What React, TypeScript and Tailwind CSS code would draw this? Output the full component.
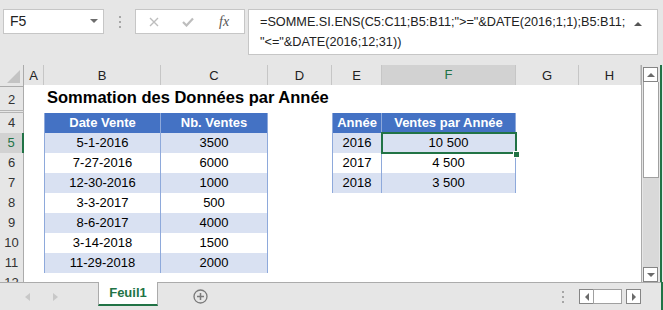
import React from 'react';

const GRID = 'grid grid-cols-[24px_20px_117px_107px_64px_50px_134px_63px_62px]';
const LETTERS = ['A', 'B', 'C', 'D', 'E', 'F', 'G', 'H'];

const sales = [
  ['5-1-2016', '3500', '2016', '10 500'],
  ['7-27-2016', '6000', '2017', '4 500'],
  ['12-30-2016', '1000', '2018', '3 500'],
  ['3-3-2017', '500'],
  ['8-6-2017', '4000'],
  ['3-14-2018', '1500'],
  ['11-29-2018', '2000'],
];

function RowHead({ n, active }: { n: number; active?: boolean }) {
  return (
    <div
      className={
        active
          ? 'flex items-center justify-center border-b border-b-[#d4d4d4] border-r-2 border-r-[#217346] bg-[#d2d2d2] text-[13px] text-[#217346]'
          : 'flex items-center justify-center border-b border-b-[#d4d4d4] border-r border-r-[#ababab] bg-[#e6e6e6] text-[13px] text-[#333]'
      }
    >
      {n}
    </div>
  );
}

function TCell({ text, kind, first }: { text?: string; kind: 'hdr' | 'band' | 'plain'; first?: boolean }) {
  const bg =
    kind === 'hdr' ? 'bg-[#4472c4] text-white font-bold' : kind === 'band' ? 'bg-[#d9e1f2] text-black' : 'bg-white text-black';
  return (
    <div
      className={`flex items-center justify-center whitespace-nowrap border-b border-r border-[#8ea9db] text-[13px] ${first ? 'border-l' : ''} ${bg}`}
    >
      {text}
    </div>
  );
}

function Blank() {
  return <div className="bg-white" />;
}

function Dots() {
  return (
    <div className="flex flex-col gap-[3px]">
      <div className="h-[2px] w-[2px] bg-[#a6a6a6]" />
      <div className="h-[2px] w-[2px] bg-[#a6a6a6]" />
      <div className="h-[2px] w-[2px] bg-[#a6a6a6]" />
    </div>
  );
}

function ArrowBox({ dir }: { dir: 'up' | 'down' | 'left' | 'right' }) {
  const paths = {
    up: 'M0 5L4 1L8 5Z',
    down: 'M0 1L8 1L4 5Z',
    left: 'M5 0L5 8L1 4Z',
    right: 'M1 0L1 8L5 4Z',
  };
  const vertical = dir === 'up' || dir === 'down';
  return (
    <div className="flex h-[15px] w-[15px] items-center justify-center border border-[#858585] bg-white">
      <svg width={vertical ? 8 : 6} height={vertical ? 6 : 8}>
        <path d={paths[dir]} fill="#6b6b6b" />
      </svg>
    </div>
  );
}

export default function App() {
  return (
    <div className="flex h-[310px] w-[663px] flex-col overflow-hidden bg-[#e6e6e6] font-['Liberation_Sans',Arial,sans-serif] text-black">
      {/* formula bar */}
      <div className="flex h-[65px] items-start pt-[9px]">
        <div className="ml-[3px] flex h-[25px] w-[101px] items-center justify-between border border-[#c6c6c6] bg-white pl-[6px] pr-[5px] text-[14px] text-[#222]">
          <span>F5</span>
          <svg width="8" height="5">
            <path d="M0 0H8L4 4Z" fill="#6d6d6d" />
          </svg>
        </div>
        <div className="ml-[15px] mt-[7px]">
          <Dots />
        </div>
        <div className="ml-[14px] flex h-[25px] w-[110px] items-center border border-[#c6c6c6] bg-white">
          <svg width="10" height="10" className="ml-[13px]">
            <path d="M1 1L9 9M9 1L1 9" stroke="#bdbdbd" strokeWidth="1.4" />
          </svg>
          <svg width="12" height="10" className="ml-[23px]">
            <path d="M1 5L4.5 8.5L11 1.5" stroke="#bdbdbd" strokeWidth="2.2" fill="none" />
          </svg>
          <span className="ml-[25px] font-['Liberation_Serif',serif] text-[14px] italic text-[#555]">fx</span>
        </div>
        <div className="ml-[3px] flex h-[46px] w-[410px] items-start justify-between border border-[#c6c6c6] bg-white pl-[11px] pr-[15px] pt-[2px] text-[12.7px] leading-[20px] text-[#222]">
          <div className="whitespace-pre">
            <div>=SOMME.SI.ENS(C5:C11;B5:B11;"&gt;="&amp;DATE(2016;1;1);B5:B11;</div>
            <div>"&lt;="&amp;DATE(2016;12;31))</div>
          </div>
          <svg width="8" height="5" className="mt-[9px]">
            <path d="M0 5L4 1L8 5Z" fill="#555" />
          </svg>
        </div>
      </div>

      {/* sheet */}
      <div className="flex h-[217px]">
        <div className="w-[641px]">
          {/* column headers */}
          <div className={`${GRID} h-[20px]`}>
            <div className="relative border-b border-r border-[#ababab] bg-[#e6e6e6]">
              <svg width="13" height="13" className="absolute bottom-[3px] right-[3px]">
                <path d="M13 0V13H0Z" fill="#c3c3c3" />
              </svg>
            </div>
            {LETTERS.map((l) =>
              l === 'F' ? (
                <div
                  key={l}
                  className="flex items-center justify-center border-r border-r-[#c6c6c6] border-b-2 border-b-[#217346] bg-[#d2d2d2] text-[13px] text-[#217346]"
                >
                  {l}
                </div>
              ) : (
                <div
                  key={l}
                  className="flex items-center justify-center border-b border-r border-b-[#ababab] border-r-[#c6c6c6] bg-[#e6e6e6] text-[13px] text-[#222]"
                >
                  {l}
                </div>
              )
            )}
          </div>

          {/* row 2: title */}
          <div className={`${GRID} h-[25px]`}>
            <div className="flex items-end justify-center border-r border-[#ababab] bg-[#e6e6e6] pb-[2px] text-[13px] text-[#333]">
              2
            </div>
            <Blank />
            <div className="col-span-7 flex items-end whitespace-nowrap bg-white pb-[2px] pl-[3px] text-[16.5px] font-bold">
              Sommation des Données par Année
            </div>
          </div>

          {/* hidden row 3 */}
          <div className={`${GRID} h-[3px]`}>
            <div className="border-y border-r border-[#b5b5b5] bg-[#e6e6e6]" />
            <div className="col-span-8 bg-white" />
          </div>

          {/* row 4: headers */}
          <div className={`${GRID} h-[20px]`}>
            <RowHead n={4} />
            <Blank />
            <TCell text="Date Vente" kind="hdr" first />
            <TCell text="Nb. Ventes" kind="hdr" />
            <Blank />
            <TCell text="Année" kind="hdr" first />
            <TCell text="Ventes par Année" kind="hdr" />
            <Blank />
            <Blank />
          </div>

          {sales.map((r, i) => {
            const kind = i % 2 === 0 ? 'band' : 'plain';
            return (
              <div key={i} className={`${GRID} h-[20px]`}>
                <RowHead n={5 + i} active={i === 0} />
                <Blank />
                <TCell text={r[0]} kind={kind} first />
                <TCell text={r[1]} kind={kind} />
                <Blank />
                {r[2] ? <TCell text={r[2]} kind={kind} first /> : <Blank />}
                {r[3] ? (
                  i === 0 ? (
                    <div className="relative">
                      <TCellFill text={r[3]} />
                      <div className="absolute -left-[1px] -top-[1px] h-[22px] w-[136px] border-2 border-[#217346]" />
                      <div className="absolute -bottom-[3px] -right-[3px] h-[5px] w-[5px] bg-[#217346] outline outline-1 outline-white" />
                    </div>
                  ) : (
                    <TCell text={r[3]} kind={kind} />
                  )
                ) : (
                  <Blank />
                )}
                <Blank />
                <Blank />
              </div>
            );
          })}

          {/* row 12, cut off */}
          <div className={`${GRID} h-[9px]`}>
            <div className="overflow-hidden border-r border-[#ababab] bg-[#e6e6e6]">
              <div className="flex h-[20px] items-center justify-center text-[13px] text-[#333]">12</div>
            </div>
            <div className="col-span-8 bg-white" />
          </div>
        </div>
        <div className="w-[1px] bg-[#ababab]" />

        {/* vertical scrollbar */}
        <div className="ml-[1px] flex w-[16px] flex-col pt-[2px]">
          <ArrowBox dir="up" />
          <div className="h-[96px] border-x border-b border-[#a0a0a0] bg-white" />
          <div className="flex-1 bg-[#d9d9d9]" />
          <ArrowBox dir="down" />
        </div>
        <div className="ml-[1px] w-[2px] bg-[#217346]" />
      </div>

      {/* sheet tabs */}
      <div className="flex h-[28px]">
        <div className="flex w-[661px] items-start border-t border-[#ababab]">
          <svg width="5" height="8" className="ml-[25px] mt-[10px]">
            <path d="M5 0V8L0 4Z" fill="#c8c8c8" />
          </svg>
          <svg width="5" height="8" className="ml-[23px] mt-[10px]">
            <path d="M0 0V8L5 4Z" fill="#c8c8c8" />
          </svg>
          <div className="-mt-[1px] ml-[40px] flex h-[24px] w-[60px] items-center justify-center border-x border-b-2 border-x-[#ababab] border-b-[#217346] bg-white text-[13px] font-bold text-[#217346]">
            Feuil1
          </div>
          <svg width="15" height="15" className="ml-[35px] mt-[6px]">
            <circle cx="7.5" cy="7.5" r="6.5" stroke="#7a7a7a" strokeWidth="1.3" fill="none" />
            <path d="M7.5 4V11M4 7.5H11" stroke="#7a7a7a" strokeWidth="1.5" />
          </svg>
          <div className="flex-1" />
          <div className="mt-[8px]">
            <Dots />
          </div>
          <div className="ml-[15px] mt-[6px] flex">
            <ArrowBox dir="left" />
            <div className="-ml-[1px] h-[15px] w-[29px] border border-[#a0a0a0] bg-white" />
            <div className="ml-[4px]">
              <ArrowBox dir="right" />
            </div>
          </div>
          <div className="w-[20px]" />
        </div>
        <div className="w-[2px] bg-[#217346]" />
      </div>
    </div>
  );
}

function TCellFill({ text }: { text: string }) {
  return (
    <div className="flex h-full items-center justify-center border-b border-r border-[#8ea9db] bg-[#d9e1f2] text-[13px] text-black">
      {text}
    </div>
  );
}
